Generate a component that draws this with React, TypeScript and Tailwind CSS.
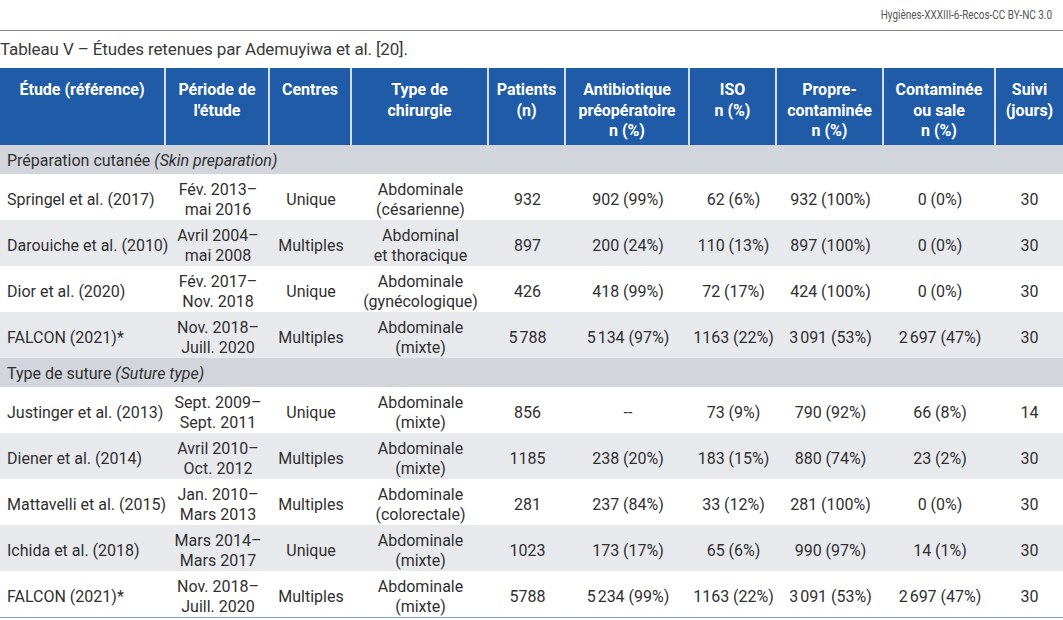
import React from "react";

const NB = "\u202F";

type Row = {
  etude: string;
  periode: [string, string];
  centres: string;
  type: [string, string];
  patients: string;
  atb: string;
  iso: string;
  propre: string;
  contam: string;
  suivi: string;
};

const group1: Row[] = [
  { etude: "Springel et al. (2017)", periode: ["Fév. 2013–", "mai 2016"], centres: "Unique", type: ["Abdominale", "(césarienne)"], patients: "932", atb: "902 (99%)", iso: "62 (6%)", propre: "932 (100%)", contam: "0 (0%)", suivi: "30" },
  { etude: "Darouiche et al. (2010)", periode: ["Avril 2004–", "mai 2008"], centres: "Multiples", type: ["Abdominal", "et thoracique"], patients: "897", atb: "200 (24%)", iso: "110 (13%)", propre: "897 (100%)", contam: "0 (0%)", suivi: "30" },
  { etude: "Dior et al. (2020)", periode: ["Fév. 2017–", "Nov. 2018"], centres: "Unique", type: ["Abdominale", "(gynécologique)"], patients: "426", atb: "418 (99%)", iso: "72 (17%)", propre: "424 (100%)", contam: "0 (0%)", suivi: "30" },
  { etude: "FALCON (2021)*", periode: ["Nov. 2018–", "Juill. 2020"], centres: "Multiples", type: ["Abdominale", "(mixte)"], patients: `5${NB}788`, atb: `5${NB}134 (97%)`, iso: "1163 (22%)", propre: `3${NB}091 (53%)`, contam: `2${NB}697 (47%)`, suivi: "30" },
];

const group2: Row[] = [
  { etude: "Justinger et al. (2013)", periode: ["Sept. 2009–", "Sept. 2011"], centres: "Unique", type: ["Abdominale", "(mixte)"], patients: "856", atb: "--", iso: "73 (9%)", propre: "790 (92%)", contam: "66 (8%)", suivi: "14" },
  { etude: "Diener et al. (2014)", periode: ["Avril 2010–", "Oct. 2012"], centres: "Multiples", type: ["Abdominale", "(mixte)"], patients: "1185", atb: "238 (20%)", iso: "183 (15%)", propre: "880 (74%)", contam: "23 (2%)", suivi: "30" },
  { etude: "Mattavelli et al. (2015)", periode: ["Jan. 2010–", "Mars 2013"], centres: "Multiples", type: ["Abdominale", "(colorectale)"], patients: "281", atb: "237 (84%)", iso: "33 (12%)", propre: "281 (100%)", contam: "0 (0%)", suivi: "30" },
  { etude: "Ichida et al. (2018)", periode: ["Mars 2014–", "Mars 2017"], centres: "Unique", type: ["Abdominale", "(mixte)"], patients: "1023", atb: "173 (17%)", iso: "65 (6%)", propre: "990 (97%)", contam: "14 (1%)", suivi: "30" },
  { etude: "FALCON (2021)*", periode: ["Nov. 2018–", "Juill. 2020"], centres: "Multiples", type: ["Abdominale", "(mixte)"], patients: `5788`, atb: `5${NB}234 (99%)`, iso: "1163 (22%)", propre: `3${NB}091 (53%)`, contam: `2${NB}697 (47%)`, suivi: "30" },
];

const headers: string[][] = [
  ["Étude (référence)"],
  ["Période de", "l'étude"],
  ["Centres"],
  ["Type de", "chirurgie"],
  ["Patients", "(n)"],
  ["Antibiotique", "préopératoire", "n (%)"],
  ["ISO", "n (%)"],
  ["Propre-", "contaminée", "n (%)"],
  ["Contaminée", "ou sale", "n (%)"],
  ["Suivi", "(jours)"],
];

const GRID = "grid grid-cols-[166px_104px_82px_137px_77px_124px_87px_107px_112px_67px]";

function Cell({ children, left }: { children: React.ReactNode; left?: boolean }) {
  return (
    <div className={left ? "flex items-center pl-[7px] whitespace-nowrap" : "flex flex-col items-center justify-center text-center whitespace-nowrap"}>
      {children}
    </div>
  );
}

function DataRow({ r, shaded }: { r: Row; shaded: boolean }) {
  return (
    <div className={`${GRID} h-[46px] pt-[6px] ${shaded ? "bg-[#e8e9ed]" : "bg-white"} leading-[20px]`}>
      <Cell left>{r.etude}</Cell>
      <Cell>
        <span>{r.periode[0]}</span>
        <span>{r.periode[1]}</span>
      </Cell>
      <Cell>{r.centres}</Cell>
      <Cell>
        <span>{r.type[0]}</span>
        <span>{r.type[1]}</span>
      </Cell>
      <Cell>{r.patients}</Cell>
      <Cell>{r.atb}</Cell>
      <Cell>{r.iso}</Cell>
      <Cell>{r.propre}</Cell>
      <Cell>{r.contam}</Cell>
      <Cell>{r.suivi}</Cell>
    </div>
  );
}

function Section({ fr, en }: { fr: string; en: string }) {
  return (
    <div className="h-[29px] pt-[3px] bg-[#d2d5dc] flex items-center pl-[7px]">
      <span>
        {fr} <span className="italic">({en})</span>
      </span>
    </div>
  );
}

export default function App() {
  return (
    <div className="w-[1063px] h-[620px] overflow-hidden bg-white text-[#303030] font-['Roboto',sans-serif] text-[16px]">
      <div className="h-[31px] border-b border-[#8a8a8a] flex items-center justify-end pr-[11px]">
        <span className="text-[13px] text-[#555] origin-right scale-x-[0.765] whitespace-nowrap">
          Hygiènes-XXXIII-6-Recos-CC BY-NC 3.0
        </span>
      </div>
      <div className="h-[37px] pt-[1px] flex items-center text-[17px] text-[#3a3a3a] tracking-[-0.008em]">
        Tableau V – Études retenues par Ademuyiwa et al. [20].
      </div>
      <div className={`${GRID} h-[77px] bg-[#1f5ba7] text-white font-bold text-[16px] leading-[20.5px]`}>
        {headers.map((lines, i) => (
          <div
            key={i}
            className={`flex flex-col items-center pt-[12px] text-center whitespace-nowrap ${i < headers.length - 1 ? "border-r-2 border-[#d6deea]" : ""}`}
          >
            {lines.map((l, j) => (
              <span key={j}>{l}</span>
            ))}
          </div>
        ))}
      </div>
      <Section fr="Préparation cutanée" en="Skin preparation" />
      {group1.map((r, i) => (
        <DataRow key={i} r={r} shaded={i % 2 === 1} />
      ))}
      <Section fr="Type de suture" en="Suture type" />
      {group2.map((r, i) => (
        <DataRow key={i} r={r} shaded={i % 2 === 1} />
      ))}
      <div className="h-px bg-[#7d9dd0]" />
    </div>
  );
}
